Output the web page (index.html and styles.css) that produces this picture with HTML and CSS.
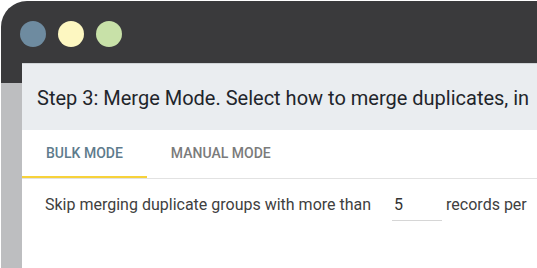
FILE: index.html
```html
<!DOCTYPE html>
<html>
<head>
<meta charset="utf-8">
<link rel="stylesheet" href="styles.css">
</head>
<body>
<div class="window">
  <div class="titlebar">
    <span class="dot dot-blue"></span>
    <span class="dot dot-yellow"></span>
    <span class="dot dot-green"></span>
  </div>
  <div class="main">
    <div class="side">
      <div class="side-top"></div>
      <div class="side-bottom"></div>
    </div>
    <div class="panel">
      <div class="header">Step 3: Merge Mode. Select how to merge duplicates, in</div>
      <div class="tabs">
        <div class="tab active">BULK MODE</div>
        <div class="tab">MANUAL MODE</div>
      </div>
      <div class="row">
        <span class="label">Skip merging duplicate groups with more than</span>
        <span class="input">5</span>
        <span class="label">records per</span>
      </div>
    </div>
  </div>
</div>
</body>
</html>
```

FILE: styles.css
```css
html, body {
  margin: 0;
  padding: 0;
  background: #ffffff;
  overflow: hidden;
}
body {
  font-family: Roboto, "Liberation Sans", sans-serif;
  width: 537px;
  height: 268px;
}
.window {
  margin: 1px 0 0 1px;
  height: 267px;
  background: #3a3a3c;
  border-top-left-radius: 26px;
  display: flex;
  flex-direction: column;
  overflow: hidden;
}
.titlebar {
  height: 62px;
  flex: none;
  display: flex;
  align-items: flex-start;
  gap: 12px;
  padding: 20px 0 0 19px;
  box-sizing: border-box;
}
.dot {
  width: 26px;
  height: 26px;
  border-radius: 50%;
  display: block;
}
.dot-blue { background: #6e8ba0; }
.dot-yellow { background: #fdf7c1; }
.dot-green { background: #c8e1a8; }
.main {
  flex: 1;
  display: flex;
  min-height: 0;
}
.side {
  width: 21px;
  flex: none;
  display: flex;
  flex-direction: column;
}
.side-top {
  height: 20px;
}
.side-bottom {
  flex: 1;
  background: #bdbec0;
}
.panel {
  flex: 1;
  min-width: 0;
  background: #ffffff;
  border-top: 1px solid #cfd3d6;
  overflow: hidden;
}
.header {
  height: 66px;
  background: #eaedf0;
  display: flex;
  align-items: center;
  padding: 2px 0 0 15px;
  box-sizing: border-box;
  font-size: 20px;
  color: #1f252b;
  white-space: nowrap;
  overflow: hidden;
}
.tabs {
  display: flex;
  height: 48px;
  border-bottom: 1px solid #e2e2e2;
}
.tab {
  padding: 0 24px;
  display: flex;
  align-items: center;
  font-size: 14px;
  font-weight: 500;
  color: #7b7b7b;
  border-bottom: 2px solid transparent;
}
.tab.active {
  color: #5e7b8c;
  border-bottom-color: #f7d23a;
}
.row {
  display: flex;
  align-items: baseline;
  padding: 16px 0 0 23px;
  font-size: 16px;
  color: #404040;
  white-space: nowrap;
}
.input {
  width: 48px;
  margin-left: 21px;
  margin-right: 4px;
  padding: 0 0 6px 2px;
  border-bottom: 1px solid #d6d6d6;
  color: #333333;
}
```
